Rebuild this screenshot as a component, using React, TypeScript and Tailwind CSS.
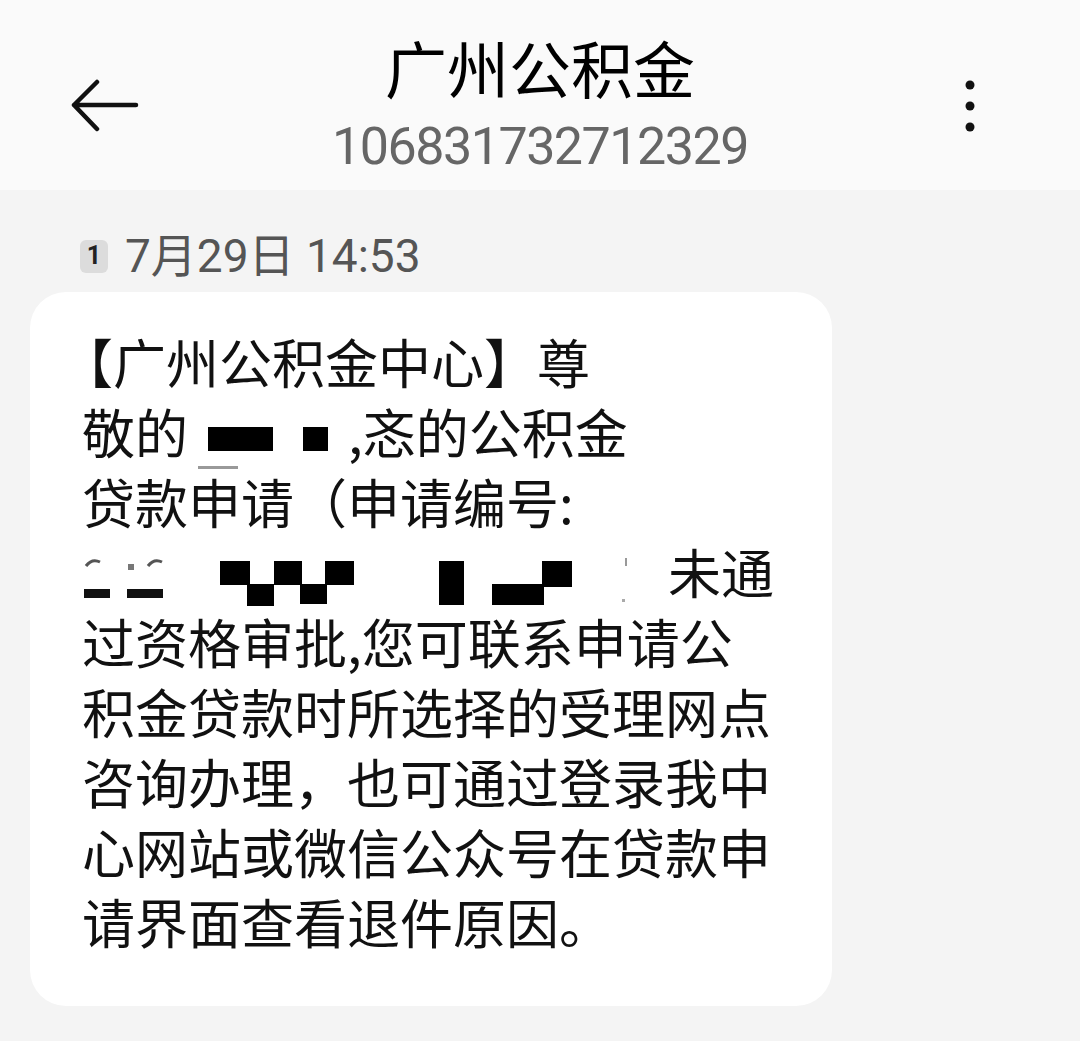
import React from 'react';

const cjk = { fontFamily: '"Noto Sans CJK SC", "Noto Sans", sans-serif' };
const num = { fontFamily: 'Roboto, "Noto Sans CJK SC", sans-serif' };

function BackArrow() {
  return (
    <svg width="70" height="54" viewBox="0 0 70 54" className="absolute left-[70px] top-[79px]">
      <path d="M4 26 H66 M27 3 L4 26 L27 50" stroke="#111" strokeWidth="4.5" fill="none" strokeLinecap="round" strokeLinejoin="round" />
    </svg>
  );
}

function Kebab() {
  return (
    <svg width="20" height="60" viewBox="0 0 20 60" className="absolute left-[960px] top-[76px]">
      <circle cx="10" cy="9" r="4.5" fill="#111" />
      <circle cx="10" cy="30" r="4.5" fill="#111" />
      <circle cx="10" cy="51" r="4.5" fill="#111" />
    </svg>
  );
}

// redacted application number (row 4)
function Redacted() {
  return (
    <svg width="586" height="70" viewBox="0 0 586 70" className="shrink-0">
      {/* partial digits */}
      <path d="M4 30 q6 -8 14 -4" stroke="#555" strokeWidth="3" fill="none" />
      <rect x="2" y="53" width="26" height="9" fill="#111" />
      <rect x="46" y="28" width="6" height="6" fill="#777" />
      <path d="M66 30 q6 -8 14 -4" stroke="#555" strokeWidth="3" fill="none" />
      <rect x="45" y="53" width="36" height="9" fill="#111" />
      {/* checker block */}
      <rect x="138" y="25" width="30" height="24" fill="#000" />
      <rect x="192" y="25" width="28" height="24" fill="#000" />
      <rect x="243" y="25" width="29" height="24" fill="#000" />
      <rect x="165" y="48" width="27" height="23" fill="#000" />
      <rect x="218" y="48" width="27" height="20" fill="#000" />
      {/* single bar */}
      <rect x="357" y="25" width="25" height="44" fill="#000" />
      {/* step */}
      <rect x="410" y="48" width="52" height="21" fill="#000" />
      <rect x="460" y="25" width="30" height="26" fill="#000" />
      <rect x="543" y="22" width="2" height="8" fill="#999" />
      <rect x="540" y="63" width="3" height="3" fill="#aaa" />
    </svg>
  );
}

function Line({ children }: { children: React.ReactNode }) {
  return <div className="flex h-[70px] items-center whitespace-nowrap">{children}</div>;
}

export default function App() {
  return (
    <div className="min-h-[1041px] w-[1080px] bg-[#f4f4f4] text-[#111]" style={cjk}>
      {/* Header */}
      <div className="relative flex h-[190px] flex-col items-center bg-[#fafafa]">
        <BackArrow />
        <div className="mt-[31px] text-[62px] leading-[72px] text-black" style={cjk}>
          广州公积金
        </div>
        <div className="mt-[16px] text-[52px] leading-[56px] tracking-[-1.5px] text-[#666]" style={num}>
          106831732712329
        </div>
        <Kebab />
      </div>

      {/* Timestamp */}
      <div className="ml-[80px] mt-[42px] flex h-[48px] items-center">
        <span
          className="flex h-[33px] w-[28px] items-center justify-center rounded-[6px] bg-[#dcdcdc] text-[25px] font-bold text-[#222]"
          style={num}
        >
          1
        </span>
        <span className="ml-[17px] text-[46px] leading-[48px] text-[#555]" style={num}>
          7月29日 14:53
        </span>
      </div>

      {/* Message bubble */}
      <div className="ml-[30px] mt-[12px] w-[802px] rounded-[36px] bg-white pb-[50px] pl-[52px] pt-[34px] text-[53px] leading-[70px]">
        <Line>
          <span className="-ml-[22px]">【广州公积金中心】尊</span>
        </Line>
        <Line>
          <span>敬的</span>
          <span className="ml-[20px] mt-[16px] inline-block h-[24px] w-[65px] bg-black" />
          <span className="ml-[30px] mt-[16px] inline-block h-[24px] w-[25px] bg-black" />
          <span className="ml-[20px]">,</span>
          <span>忞的公积金</span>
        </Line>
        <Line>
          <span>贷款</span>
          <span className="relative">
            申
            <span className="absolute left-[10px] top-[0px] h-[3px] w-[40px] bg-[#999]" />
          </span>
          <span>请（申请编号:</span>
        </Line>
        <Line>
          <Redacted />
          <span>未通</span>
        </Line>
        <Line>过资格审批,您可联系申请公</Line>
        <Line>积金贷款时所选择的受理网点</Line>
        <Line>咨询办理，也可通过登录我中</Line>
        <Line>心网站或微信公众号在贷款申</Line>
        <Line>请界面查看退件原因。</Line>
      </div>
    </div>
  );
}
